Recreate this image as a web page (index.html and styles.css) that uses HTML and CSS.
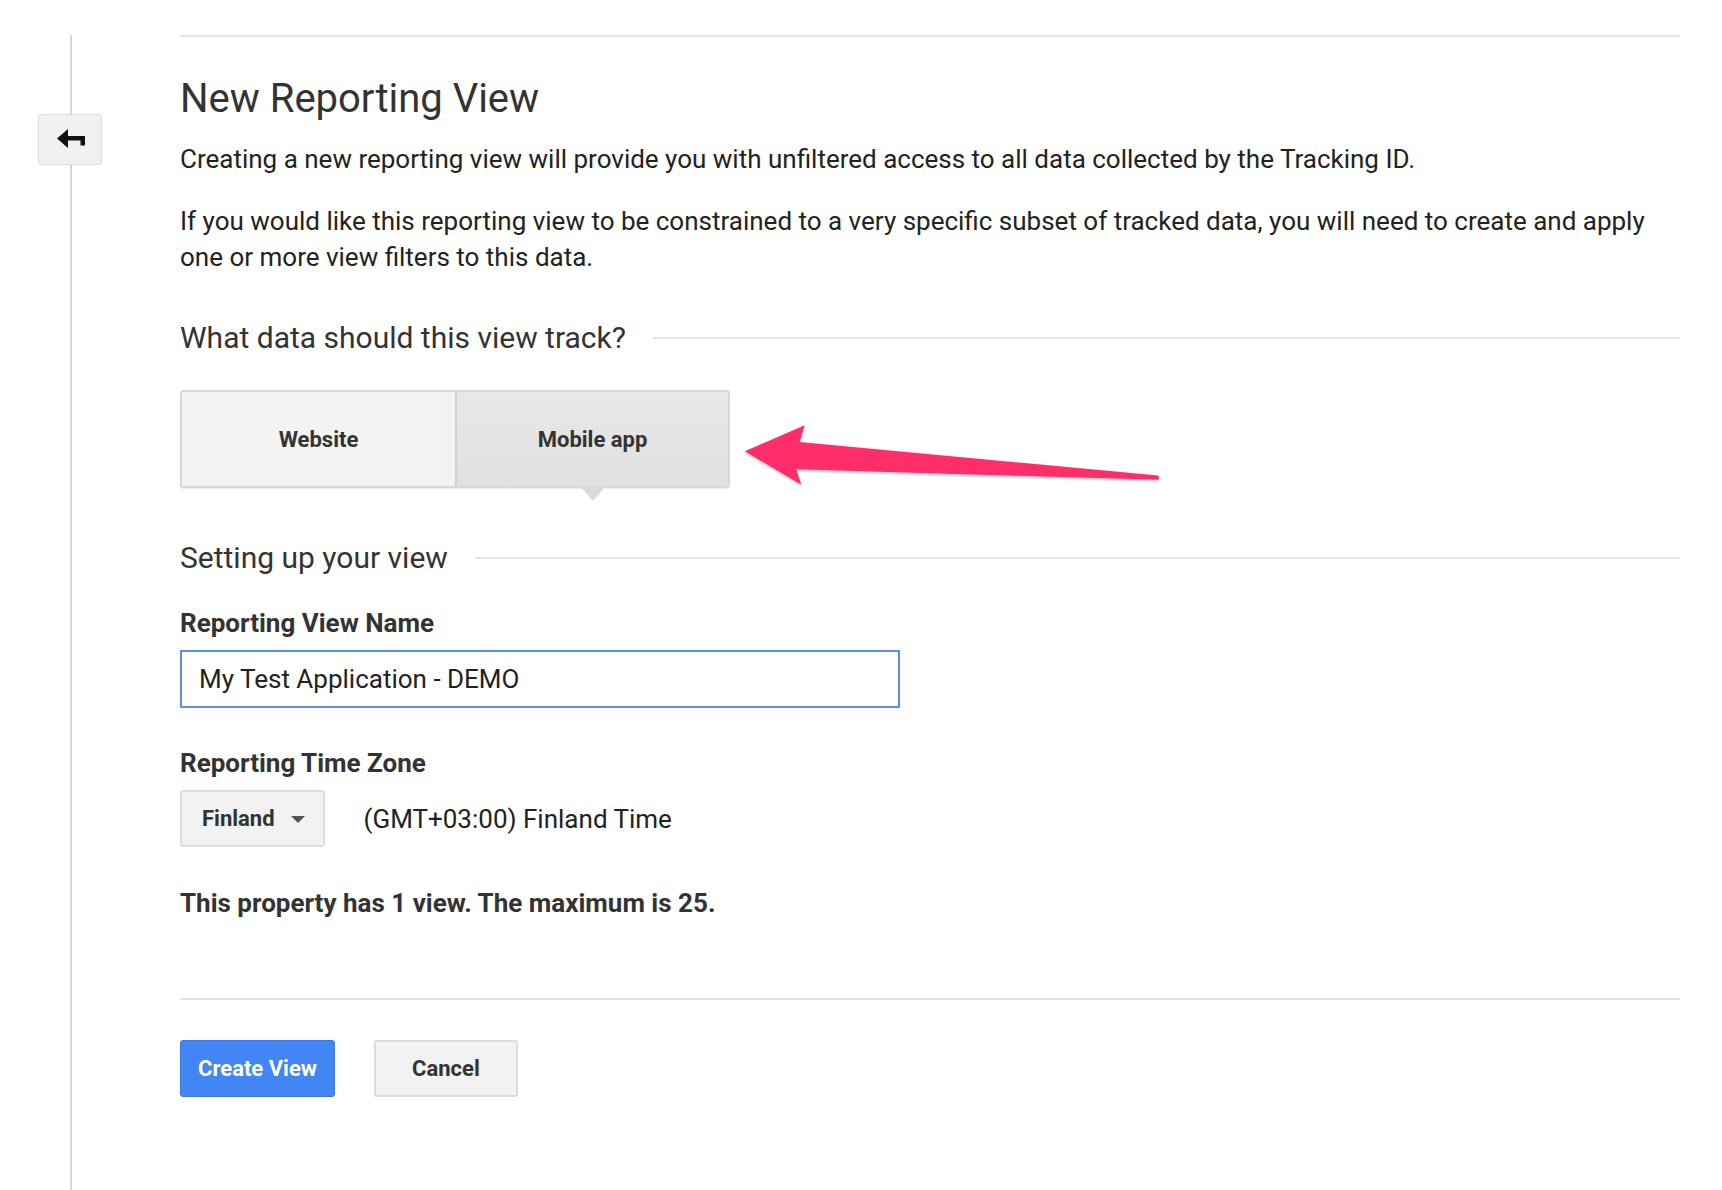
FILE: index.html
```html
<!DOCTYPE html>
<html lang="en">
<head>
<meta charset="utf-8">
<title>New Reporting View</title>
<link rel="stylesheet" href="styles.css">
</head>
<body>
<div class="page">
  <aside class="rail">
    <div class="rail-line"></div>
    <button class="back-btn" type="button" aria-label="Back">
      <svg width="28" height="19" viewBox="0 0 28 19"><path d="M0 9.5 L11 0 L11 7 L28 7 L28 16.5 L23.5 16.5 L23.5 11.5 L11 11.5 L11 19 Z" fill="#111"/></svg>
    </button>
  </aside>
  <main class="content">
    <h1 class="title">New Reporting View</h1>
    <p class="lead">Creating a new reporting view will provide you with unfiltered access to all data collected by the Tracking ID.</p>
    <p class="lead">If you would like this reporting view to be constrained to a very specific subset of tracked data, you will need to create and apply one or more view filters to this data.</p>

    <div class="section-head section-track"><h2>What data should this view track?</h2><span class="rule"></span></div>

    <div class="track-row">
      <div class="toggle">
        <button class="toggle-btn" type="button">Website</button>
        <button class="toggle-btn selected" type="button">Mobile app</button>
      </div>
      <svg class="pink-arrow" width="424" height="66" viewBox="740 420 424 66">
        <defs><filter id="sh" x="-5%" y="-20%" width="110%" height="150%"><feDropShadow dx="0" dy="1.5" stdDeviation="1.2" flood-color="#000" flood-opacity="0.25"/></filter></defs>
        <path filter="url(#sh)" d="M746.7 449.3 L806.7 423.3 L801.7 440 L1160 473.6 Q1162 475.7 1160 477.8 L798.3 467.3 L803.3 482.7 Z" fill="#ff2d6b"/>
      </svg>
    </div>

    <div class="section-head section-setup"><h2>Setting up your view</h2><span class="rule"></span></div>

    <label class="field-label" for="vname">Reporting View Name</label>
    <input class="text-input" id="vname" type="text" value="My Test Application - DEMO">

    <div class="field-label tz-label">Reporting Time Zone</div>
    <div class="tz-row">
      <button class="select-btn" type="button">Finland <span class="caret"></span></button>
      <span class="tz-text">(GMT+03:00) Finland Time</span>
    </div>

    <p class="views-note">This property has 1 view. The maximum is 25.</p>

    <div class="actions">
      <button class="btn-primary" type="button">Create View</button>
      <button class="btn-secondary" type="button">Cancel</button>
    </div>
  </main>
</div>
</body>
</html>
```

FILE: styles.css
```css
* { box-sizing: border-box; }
html, body { margin: 0; padding: 0; background: #fff; }
body {
  font-family: Roboto, "Noto Sans", Arial, sans-serif;
  color: #222;
  width: 1722px;
  height: 1190px;
  overflow: hidden;
}
.page {
  display: flex;
  padding-top: 35px;
  height: 1190px;
}
.rail {
  position: relative;
  width: 180px;
  flex: 0 0 180px;
}
.rail-line {
  margin-left: 70px;
  width: 2px;
  height: 100%;
  background: #d6d6d6;
}
.back-btn {
  position: absolute;
  left: 38px;
  top: 79px;
  width: 64px;
  height: 51px;
  border: 1px solid #dcdcdc;
  border-radius: 3px;
  background: #f1f1f1;
  display: flex;
  align-items: center;
  justify-content: center;
  padding: 0 0 2px 2px;
}
.content {
  width: 1500px;
  border-top: 2px solid #e3e3e3;
}
.title {
  margin: 38px 0 0;
  font-size: 40px;
  font-weight: 400;
  line-height: 48px;
  color: #333;
}
.lead {
  margin: 18px 0 0;
  font-size: 26px;
  line-height: 36px;
  color: #222;
}
.lead + .lead { margin-top: 26px; }
.section-head {
  display: flex;
  align-items: center;
  gap: 27px;
}
.section-head h2 {
  margin: 0;
  font-size: 30px;
  font-weight: 400;
  line-height: 40px;
  color: #333;
  white-space: nowrap;
}
.section-head .rule {
  flex: 1;
  height: 2px;
  background: #e3e3e3;
}
.section-track { margin-top: 43px; }
.track-row {
  display: flex;
  align-items: flex-start;
  margin-top: 32px;
  height: 116px;
}
.toggle {
  display: flex;
  border: 2px solid #d8d8d8;
  border-radius: 3px;
  box-shadow: 0 1px 1px rgba(0,0,0,0.08);
}
.toggle-btn {
  position: relative;
  width: 273px;
  height: 94px;
  border: 0;
  background: #f3f3f3;
  font-family: Roboto, Arial, sans-serif;
  font-weight: 700;
  font-size: 22px;
  color: #333;
  padding: 0;
}
.toggle-btn.selected {
  background: linear-gradient(#e8e8e8, #e0e0e0);
  border-left: 2px solid #d0d0d0;
}
.toggle-btn.selected::after {
  content: "";
  position: absolute;
  left: 50%;
  bottom: -15px;
  margin-left: -12px;
  border-left: 12px solid transparent;
  border-right: 12px solid transparent;
  border-top: 14px solid #dadada;
}
.pink-arrow { margin-left: 8px; margin-top: 32px; }
.section-setup { margin-top: 32px; }
.field-label {
  display: block;
  margin-top: 28px;
  font-size: 26px;
  font-weight: 700;
  line-height: 34px;
  color: #333;
}
.text-input {
  display: block;
  margin-top: 10px;
  width: 720px;
  height: 58px;
  border: 2px solid #5b8fe6;
  border-radius: 1px;
  padding: 0 17px;
  font-family: Roboto, Arial, sans-serif;
  font-size: 26px;
  color: #222;
  outline: none;
}
.tz-label { margin-top: 38px; }
.tz-row {
  display: flex;
  align-items: center;
  gap: 39px;
  margin-top: 10px;
}
.select-btn {
  display: flex;
  align-items: center;
  gap: 16px;
  height: 57px;
  padding: 0 18px 0 20px;
  border: 2px solid #dedede;
  border-radius: 3px;
  background: #f2f2f2;
  font-family: Roboto, Arial, sans-serif;
  font-weight: 700;
  font-size: 22px;
  color: #333;
}
.caret {
  width: 0; height: 0;
  border-left: 7px solid transparent;
  border-right: 7px solid transparent;
  border-top: 7px solid #555;
  margin-top: 2px;
}
.tz-text {
  font-size: 26px;
  color: #222;
}
.views-note {
  margin: 39px 0 0;
  font-size: 26px;
  font-weight: 700;
  line-height: 34px;
  color: #333;
  padding-bottom: 78px;
  border-bottom: 2px solid #e3e3e3;
}
.actions {
  display: flex;
  gap: 39px;
  margin-top: 40px;
}
.btn-primary {
  height: 57px;
  padding: 0 17px;
  border: 1px solid #3b78e7;
  border-radius: 3px;
  background: #4285f4;
  color: #fff;
  font-family: Roboto, Arial, sans-serif;
  font-weight: 700;
  font-size: 22px;
}
.btn-secondary {
  height: 57px;
  width: 144px;
  border: 2px solid #dcdcdc;
  border-radius: 3px;
  background: #f2f2f2;
  color: #333;
  font-family: Roboto, Arial, sans-serif;
  font-weight: 700;
  font-size: 22px;
}
```
